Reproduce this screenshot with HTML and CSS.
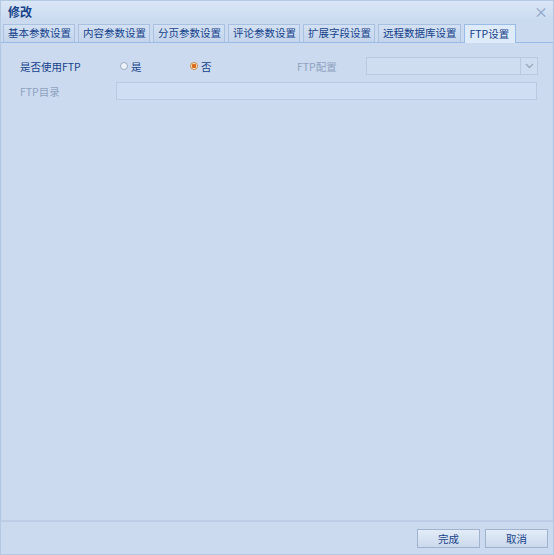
FILE: index.html
```html
<!DOCTYPE html>
<html lang="zh">
<head>
<meta charset="utf-8">
<title>修改</title>
<link rel="stylesheet" href="styles.css">
</head>
<body>
<div class="window">
  <div class="titlebar">
    <span class="title">修改</span>
    <span class="close">×</span>
  </div>
  <div class="tabstrip">
    <div class="tab">基本参数设置</div>
    <div class="tab">内容参数设置</div>
    <div class="tab">分页参数设置</div>
    <div class="tab">评论参数设置</div>
    <div class="tab">扩展字段设置</div>
    <div class="tab">远程数据库设置</div>
    <div class="tab active">FTP设置</div>
  </div>
  <div class="content">
    <div class="row">
      <label class="label use">是否使用FTP</label>
      <div class="radios">
        <span class="radio"><span class="dot"></span>是</span>
        <span class="radio checked"><span class="dot"></span>否</span>
      </div>
      <label class="label disabled cfg">FTP配置</label>
      <div class="combo"><span class="trigger"><svg width="9" height="6" viewBox="0 0 9 6"><path d="M1 1 L4.5 4.5 L8 1" fill="none" stroke="#9aaac0" stroke-width="1.4"/></svg></span></div>
    </div>
    <div class="row">
      <label class="label disabled">FTP目录</label>
      <div class="textbox"></div>
    </div>
  </div>
  <div class="footer">
    <button class="btn">完成</button>
    <button class="btn">取消</button>
  </div>
</div>
</body>
</html>
```
FILE: styles.css
```css
html, body {
  margin: 0;
  padding: 0;
}
body {
  width: 554px;
  height: 555px;
  font-family: "Noto Sans CJK SC", "Liberation Sans", sans-serif;
  font-size: 10.5px;
  background: #cad9ee;
}
.window {
  width: 554px;
  height: 555px;
  display: flex;
  flex-direction: column;
  background: #cbdaef;
  box-sizing: border-box;
  border: 1px solid #b5c8e2;
}
.titlebar {
  height: 20px;
  display: flex;
  align-items: center;
  justify-content: space-between;
  padding: 0 5px 0 7px;
  background: linear-gradient(#d9e6f7, #cadaee);
}
.title {
  font-weight: bold;
  color: #15428b;
  font-size: 12px;
}
.close {
  color: #8aa2c4;
  font-size: 14px;
  line-height: 1;
}
.tabstrip {
  display: flex;
  gap: 3px;
  padding: 2px 2px 0 2px;
  height: 18px;
  border-bottom: 1px solid #99bbe8;
  margin-top: 1px;
}
.tab {
  flex-shrink: 0;
  white-space: nowrap;
  height: 17px;
  padding: 0 3px 0 4px;
  border: 1px solid #a9c1e0;
  border-bottom: none;
  background: linear-gradient(#d4e1f3, #c3d4ec);
  color: #15428b;
  display: flex;
  align-items: center;
  line-height: 1;
  font-size: 10.5px;
}
.tab.active {
  background: #deebfb;
  height: 18px;
  margin-bottom: -1px;
  padding: 0 6px 0 5px;
  border-color: #99bbe8;
}
.content {
  flex: 1;
  padding: 14px 14px 0 18px;
  display: flex;
  flex-direction: column;
  gap: 7px;
  border-left: 1px solid #c4d5ec;
  border-right: 1px solid #c4d5ec;
}
.row {
  display: flex;
  align-items: center;
  height: 18px;
}
.label {
  width: 96px;
  flex-shrink: 0;
  color: #15428b;
  font-size: 10.5px;
}
.label.use {
  width: 100px;
}
.label.disabled {
  color: #8fa2bf;
}
.radios {
  display: flex;
  width: 177px;
  flex-shrink: 0;
}
.radio {
  display: flex;
  align-items: center;
  gap: 3px;
  width: 70px;
  color: #15428b;
  font-size: 10.5px;
}
.dot {
  width: 8px;
  height: 8px;
  border-radius: 50%;
  border: 1px solid #9cabbf;
  background: #eef3fa;
  box-sizing: border-box;
  display: inline-block;
}
.radio.checked .dot {
  border-color: #cf8a3b;
  background: radial-gradient(circle, #d86b17 0 2px, #f6e6d0 2.5px);
}
.label.cfg {
  width: 69px;
}
.combo {
  flex: 1;
  height: 18px;
  border: 1px solid #b9c9df;
  background: #cfddf1;
  box-sizing: border-box;
  display: flex;
  justify-content: flex-end;
}
.trigger {
  width: 16px;
  border-left: 1px solid #b9c9df;
  display: flex;
  align-items: center;
  justify-content: center;
}
.textbox {
  flex: 1;
  height: 18px;
  border: 1px solid #b9c9df;
  background: #cfdef2;
  box-sizing: border-box;
  margin-right: 1px;
}
.footer {
  height: 34px;
  box-sizing: border-box;
  border-top: 2px solid #bccde5;
  display: flex;
  justify-content: flex-end;
  align-items: flex-end;
  gap: 5px;
  padding: 0 5px 6px 0;
}
.btn {
  width: 63px;
  height: 19px;
  border: 1px solid #9fb3cf;
  background: linear-gradient(#e3ecf8, #cbd9ec);
  color: #15428b;
  font-family: inherit;
  font-size: 10.5px;
  padding: 0;
}
```
